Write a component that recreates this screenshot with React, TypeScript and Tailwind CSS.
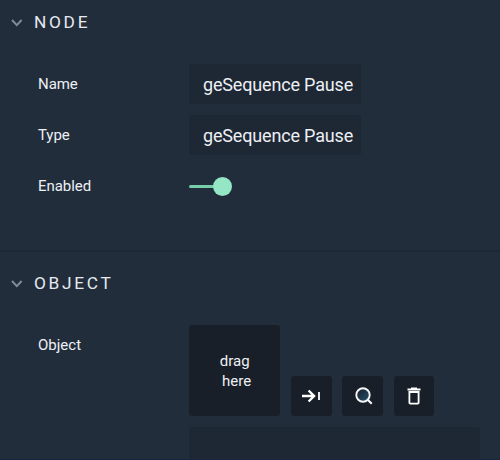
import type { ReactNode } from "react";

function SectionHeader({ title }: { title: string }) {
  return (
    <div className="flex h-[46px] items-center pl-[11px]">
      <svg width="12" height="8" viewBox="0 0 12 8" fill="none" className="shrink-0">
        <path d="M1 1L5.8 6.2L10.6 1" stroke="#858c99" strokeWidth="1.9" />
      </svg>
      <h2 className="-mt-[2px] ml-[11px] text-[17.3px] leading-[22px] font-normal tracking-[2.7px] text-[#e6eaef]">{title}</h2>
    </div>
  );
}

function Row({ label, children }: { label: string; children: ReactNode }) {
  return (
    <div className="flex h-10 items-center pl-[38px]">
      <span className="w-[151px] shrink-0 text-[15px] leading-5 tracking-[-0.05px]">{label}</span>
      {children}
    </div>
  );
}

function TextField({ value }: { value: string }) {
  return (
    <div className="flex h-10 w-[172px] items-center rounded-[2px] bg-[#1e2734] pl-[14px] text-[18px] tracking-[-0.17px] whitespace-nowrap">
      {value}
    </div>
  );
}

function IconButton({ children, label }: { children: ReactNode; label: string }) {
  return (
    <button aria-label={label} className="flex h-10 w-[40.5px] items-center justify-center rounded-[3px] bg-[#191f28]">
      {children}
    </button>
  );
}

export default function App() {
  return (
    <div className="flex h-[460px] w-[500px] flex-col overflow-hidden bg-[#222d3c] font-['Roboto',sans-serif] text-[#edf0f4]">
      <section className="h-[250px] shrink-0">
        <SectionHeader title="NODE" />
        <div className="flex flex-col gap-[11px] pt-[18px]">
          <Row label="Name"><TextField value="geSequence Pause" /></Row>
          <Row label="Type"><TextField value="geSequence Pause" /></Row>
          <Row label="Enabled">
            <div className="flex items-center">
              <div className="h-[3px] w-[25px] rounded-l-full bg-[#75cdaa]" />
              <div className="-ml-px size-[19px] rounded-full bg-[#94e6c5]" />
            </div>
          </Row>
        </div>
      </section>
      <section className="min-h-0 flex-1 overflow-hidden border-t-2 border-[#1e2735]">
        <div className="pt-[9px]"><SectionHeader title="OBJECT" /></div>
        <div className="flex pt-[18px] pl-[38px]">
          <span className="mt-[10px] w-[151px] shrink-0 text-[15px] leading-5">Object</span>
          <div>
            <div className="flex items-end gap-[10.75px]">
              <div className="flex h-[91px] w-[91.3px] flex-col items-center justify-center rounded-[3px] bg-[#191f28] text-[15px] leading-5">
                <span>drag</span>
                <span className="ml-1">here</span>
              </div>
              <IconButton label="Use selected">
                <svg width="20" height="14" viewBox="0 0 20 14" fill="none" stroke="#fff" strokeWidth="2.4">
                  <path d="M1 7H13M7.6 1.5L13.1 7L7.6 12.5" />
                  <path d="M18 3V11" strokeWidth="1.8" />
                </svg>
              </IconButton>
              <IconButton label="Find">
                <svg width="18" height="18" viewBox="0 0 18 18" fill="none" stroke="#f5f7f9" className="ml-[2px]">
                  <defs>
                    <linearGradient id="lens" x1="0" y1="0" x2="1" y2="1">
                      <stop offset=".2" stopColor="#1c2733" />
                      <stop offset=".9" stopColor="#25506b" />
                    </linearGradient>
                  </defs>
                  <circle cx="8" cy="8" r="6.7" fill="url(#lens)" strokeWidth="1.9" />
                  <path d="M12.5 12.5L16.7 16.7" strokeWidth="2.2" />
                </svg>
              </IconButton>
              <IconButton label="Delete">
                <svg width="14" height="18" viewBox="0 0 14 18" fill="none" stroke="#fff" strokeWidth="1.8">
                  <path d="M.5 2.5H13.5M4 1.4H10" />
                  <path d="M2.4 5H11.6V15.7Q11.6 16.6 10.7 16.6H3.3Q2.4 16.6 2.4 15.7Z" />
                </svg>
              </IconButton>
            </div>
            <div className="mt-[11px] h-10 w-[291px] rounded-[2px] bg-[#1e2734]" />
          </div>
        </div>
      </section>
      <div className="h-px shrink-0 bg-[#1c2440]" />
    </div>
  );
}
